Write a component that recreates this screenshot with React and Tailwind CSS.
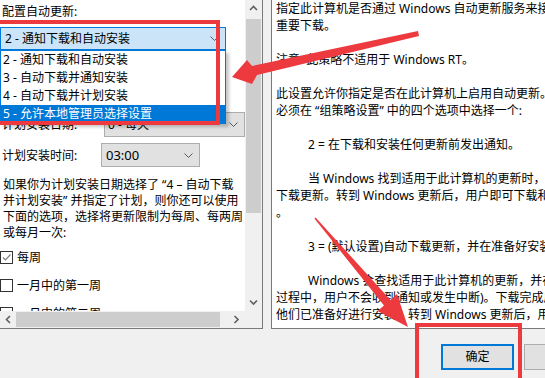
import React from "react";

function Chevron() {
  return (
    <svg width="9" height="5" viewBox="0 0 9 5" className="shrink-0">
      <path d="M0.5 0.5 L4.5 4.5 L8.5 0.5" fill="none" stroke="#5a5a5a" strokeWidth="1" />
    </svg>
  );
}

function ArrowGlyph({ dir }) {
  const paths = {
    up: "M1 5 L4.5 1.5 L8 5",
    down: "M1 1.5 L4.5 5 L8 1.5",
    left: "M5 1 L1.5 4.5 L5 8",
    right: "M1.5 1 L5 4.5 L1.5 8",
  };
  const vertical = dir === "up" || dir === "down";
  return (
    <svg
      width={vertical ? 9 : 7}
      height={vertical ? 7 : 9}
      viewBox={vertical ? "0 0 9 7" : "0 0 7 9"}
    >
      <path d={paths[dir]} fill="none" stroke="#606060" strokeWidth="1.6" />
    </svg>
  );
}

function CheckBox({ checked }) {
  return (
    <div className="w-[13px] h-[13px] border border-[#333333] bg-white flex items-center justify-center shrink-0">
      {checked && (
        <svg width="11" height="11" viewBox="0 0 11 11">
          <path d="M2 5.5 L4.5 8 L9.5 2.5" fill="none" stroke="#808080" strokeWidth="1.2" />
        </svg>
      )}
    </div>
  );
}

const rightLines = [
  { t: "指定此计算机是否通过 Windows 自动更新服务来接收安全更新和其他" },
  { t: "重要下载。" },
  { t: "" },
  { t: "注意: 此策略不适用于 Windows RT。" },
  { t: "" },
  { t: "此设置允许你指定是否在此计算机上启用自动更新。如果启用此服务，则" },
  { t: "必须在 “组策略设置” 中的四个选项中选择一个:" },
  { t: "" },
  { t: "2 = 在下载和安装任何更新前发出通知。", i: true },
  { t: "" },
  { t: "当 Windows 找到适用于此计算机的更新时，将通知用户更新已准备好", i: true },
  { t: "下载更新。转到 Windows 更新后，用户即可下载和安装任何可用的更新" },
  { t: "。" },
  { t: "" },
  { t: "3 = (默认设置)自动下载更新，并在准备好安装时通知", i: true },
  { t: "" },
  { t: "Windows 会查找适用于此计算机的更新，并在后台下载这些更新(在此", i: true },
  { t: "过程中，用户不会收到通知或发生中断)。下载完成后，将通知用户" },
  { t: "他们已准备好进行安装。转到 Windows 更新后，用户即可安装它们。" },
];

export default function App() {
  const font = { fontFamily: '"Noto Sans", "Noto Sans CJK SC", sans-serif' };
  return (
    <div
      className="relative w-[545px] h-[378px] overflow-hidden bg-[#f0f0f0] text-black text-[12px]"
      style={font}
    >
      <div className="flex h-[329px]">
        {/* Left panel */}
        <div className="flex flex-col w-[263px] h-[329px] shrink-0 border-r border-b border-[#7a7a7a]">
          <div className="flex h-[311px]">
            <div className="w-[245px] h-[311px] bg-white overflow-hidden flex flex-col leading-[17px] whitespace-nowrap">
              <div className="mt-[3px] pl-[2px] h-[17px] shrink-0">配置自动更新:</div>
              <div className="mt-[7px] w-[226px] h-[23px] shrink-0 border border-[#0078d7] bg-[#cce4f7] flex items-center justify-between pl-[4px] pr-[6px]">
                <span>2 - 通知下载和自动安装</span>
                <Chevron />
              </div>
              <div className="mt-[62px] h-[25px] shrink-0 flex items-center">
                <span className="w-[104px] pl-[2px] shrink-0">计划安装日期:</span>
                <div className="w-[141px] h-[25px] shrink-0 border border-[#adadad] bg-[#e1e1e1] flex items-center justify-between pl-[3px] pr-[6px]">
                  <span>0 - 每天</span>
                  <Chevron />
                </div>
              </div>
              <div className="mt-[6px] h-[24px] shrink-0 flex items-center">
                <span className="w-[101px] pl-[2px] shrink-0">计划安装时间:</span>
                <div className="w-[99px] h-[24px] shrink-0 border border-[#adadad] bg-[#e1e1e1] flex items-center justify-between pl-[4px] pr-[6px]">
                  <span className="text-[13px]">03:00</span>
                  <Chevron />
                </div>
              </div>
              <div className="mt-[10px] pl-[3px] leading-[16px] shrink-0">
                <div>如果你为计划安装日期选择了 “4 – 自动下载</div>
                <div>并计划安装” 并指定了计划，则你还可以使用</div>
                <div>下面的选项，选择将更新限制为每周、每两周</div>
                <div>或每月一次:</div>
              </div>
              <div className="mt-[8px] h-[16px] shrink-0 flex items-center gap-[4px]">
                <CheckBox checked />
                <span>每周</span>
              </div>
              <div className="mt-[12px] h-[16px] shrink-0 flex items-center gap-[4px]">
                <CheckBox />
                <span>一月中的第一周</span>
              </div>
              <div className="mt-[12px] h-[16px] shrink-0 flex items-center gap-[4px]">
                <CheckBox />
                <span>一月中的第二周</span>
              </div>
            </div>
            {/* vertical scrollbar */}
            <div className="w-[17px] h-[311px] bg-[#f0f0f0] flex flex-col items-center">
              <div className="h-[17px] w-full flex items-center justify-center">
                <ArrowGlyph dir="up" />
              </div>
              <div className="mt-[2px] w-[15px] h-[194px] bg-[#cdcdcd]" />
              <div className="mt-auto h-[17px] w-full flex items-center justify-center">
                <ArrowGlyph dir="down" />
              </div>
            </div>
          </div>
          <div className="flex h-[17px]">
            <div className="w-[245px] h-[17px] bg-[#f0f0f0] flex items-center">
              <div className="w-[16px] h-[17px] flex items-center justify-center">
                <ArrowGlyph dir="left" />
              </div>
              <div className="w-[204px] h-[15px] bg-[#cdcdcd]" />
              <div className="ml-auto w-[17px] h-[17px] flex items-center justify-center">
                <ArrowGlyph dir="right" />
              </div>
            </div>
            <div className="w-[17px] h-[17px] bg-[#f0f0f0]" />
          </div>
        </div>

        {/* Right panel */}
        <div className="ml-[8px] flex-1 h-[329px] border-l border-b border-[#7a7a7a] bg-white overflow-hidden pl-[4px] leading-[17px] whitespace-nowrap">
          {rightLines.map((l, k) => (
            <div key={k} className={l.i ? "h-[17px] pl-[32px]" : "h-[17px]"}>
              {l.t}
            </div>
          ))}
        </div>
      </div>

      {/* Bottom buttons */}
      <div className="flex pt-[15px] pl-[441px] gap-[10px]">
        <div className="w-[73px] h-[26px] shrink-0 border-2 border-[#0078d7] bg-[#e1e1e1] flex items-center justify-center">
          确定
        </div>
        <div className="w-[73px] h-[26px] shrink-0 border border-[#adadad] bg-[#e1e1e1] flex items-center justify-center">
          取消
        </div>
      </div>

      {/* Open dropdown list (overlay) */}
      <div className="absolute top-[50px] left-0 w-[226px] border border-[#0078d7] bg-white shadow-[3px_3px_3px_rgba(0,0,0,0.22)] leading-[18px] whitespace-nowrap">
        <div className="h-[18px] pl-[2px]">2 - 通知下载和自动安装</div>
        <div className="h-[18px] pl-[2px]">3 - 自动下载并通知安装</div>
        <div className="h-[18px] pl-[2px]">4 - 自动下载并计划安装</div>
        <div className="h-[18px] pl-[2px] bg-[#0078d7] text-white">5 - 允许本地管理员选择设置</div>
      </div>

      {/* Red annotation boxes */}
      <div className="absolute left-[-4px] top-[20px] w-[224px] h-[105px] border-[4px] border-[#ec3a3f]" />
      <div className="absolute left-[415px] top-[323px] w-[107px] h-[70px] border-[4px] border-[#ec3a3f]" />

      {/* Red arrows */}
      <svg className="absolute left-0 top-0 pointer-events-none" width="545" height="378" viewBox="0 0 545 378">
        <polygon
          fill="#ec3a3f"
          points="232,77 247,60 252,66 418,31 419,36 257,75 252,84"
        />
        <polygon
          fill="#ec3a3f"
          points="315.6,217.5 390.5,300 397,294 408,327 377.5,311 384,305.5 314.4,218.5"
        />
      </svg>
    </div>
  );
}
